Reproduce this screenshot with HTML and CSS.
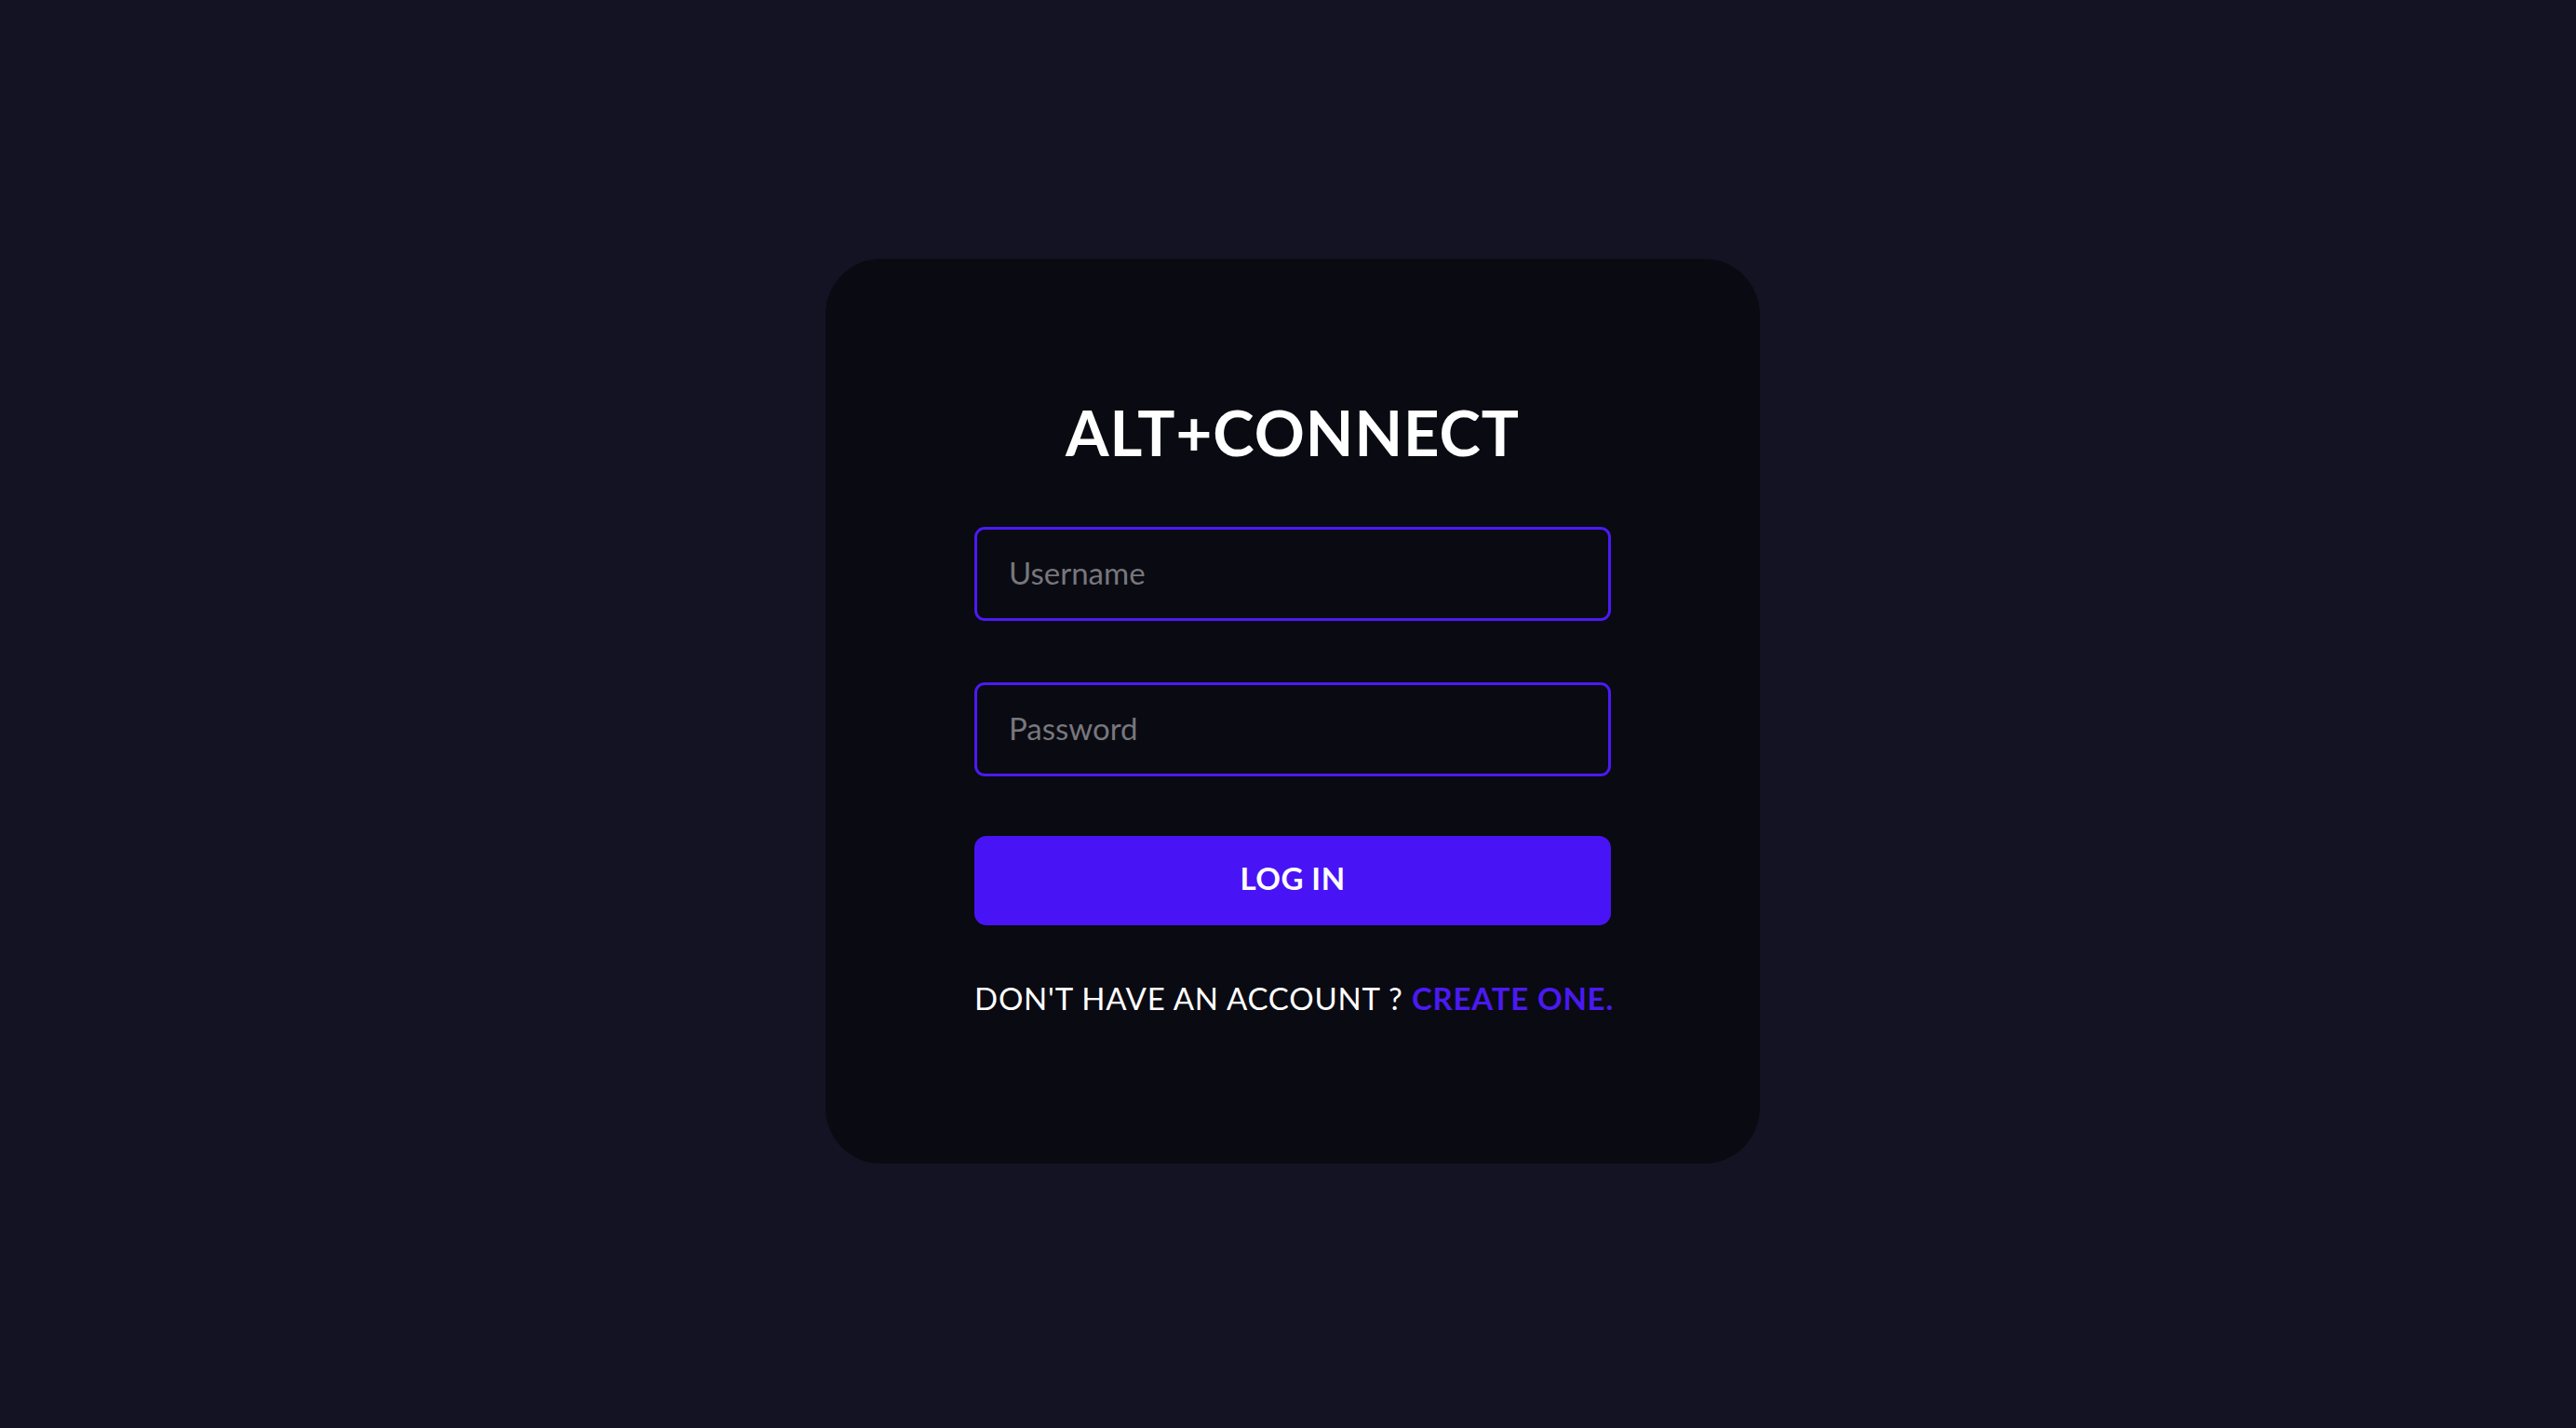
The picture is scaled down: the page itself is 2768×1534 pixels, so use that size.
FILE: index.html
```html
<!DOCTYPE html>
<html lang="en">
<head>
<meta charset="utf-8">
<title>ALT+CONNECT</title>
<link rel="stylesheet" href="styles.css">
</head>
<body>
<main class="page">
  <form class="card" onsubmit="return false">
    <h1 class="title">ALT+CONNECT</h1>
    <input class="field" type="text" placeholder="Username">
    <input class="field field-second" type="password" placeholder="Password">
    <button class="btn" type="submit">LOG IN</button>
    <p class="signup">DON'T HAVE AN ACCOUNT ? <a class="signup-link" href="#">CREATE ONE.</a></p>
  </form>
</main>
</body>
</html>
```
FILE: styles.css
```css
* { box-sizing: border-box; }
html, body { margin: 0; padding: 0; }
body {
  background: #131323;
  font-family: Lato, "Noto Sans", sans-serif;
}
.page {
  min-height: 100vh;
  display: flex;
  align-items: center;
  justify-content: center;
  padding: 0 0 6px 10px;
}
.card {
  width: 1004px;
  height: 972px;
  background: #0a0a12;
  border-radius: 60px;
  padding: 153px 160px 0;
  display: flex;
  flex-direction: column;
}
.title {
  margin: 0 0 68px;
  font-size: 67px;
  line-height: 67px;
  font-weight: 700;
  letter-spacing: 1px;
  color: #ffffff;
  text-align: center;
}
.field {
  display: block;
  width: 100%;
  height: 101px;
  border: 3px solid #4b1af5;
  border-radius: 11px;
  background: transparent;
  padding: 0 34px 4px;
  font-family: inherit;
  font-size: 33px;
  color: #ffffff;
  outline: none;
}
.field::placeholder { color: #77777d; }
.field-second { margin-top: 66px; }
.btn {
  margin-top: 64px;
  height: 96px;
  border: 0;
  border-radius: 13px;
  background: #4914f5;
  color: #ffffff;
  font-family: inherit;
  font-weight: 700;
  font-size: 33px;
  letter-spacing: 0.5px;
  padding: 0 0 6px;
}
.signup {
  margin: 62px 0 0;
  font-size: 33px;
  line-height: 33px;
  letter-spacing: 0.8px;
  color: #ffffff;
  text-align: center;
  white-space: nowrap;
}
.signup-link {
  color: #4a1af0;
  font-weight: 700;
  text-decoration: none;
}
```
